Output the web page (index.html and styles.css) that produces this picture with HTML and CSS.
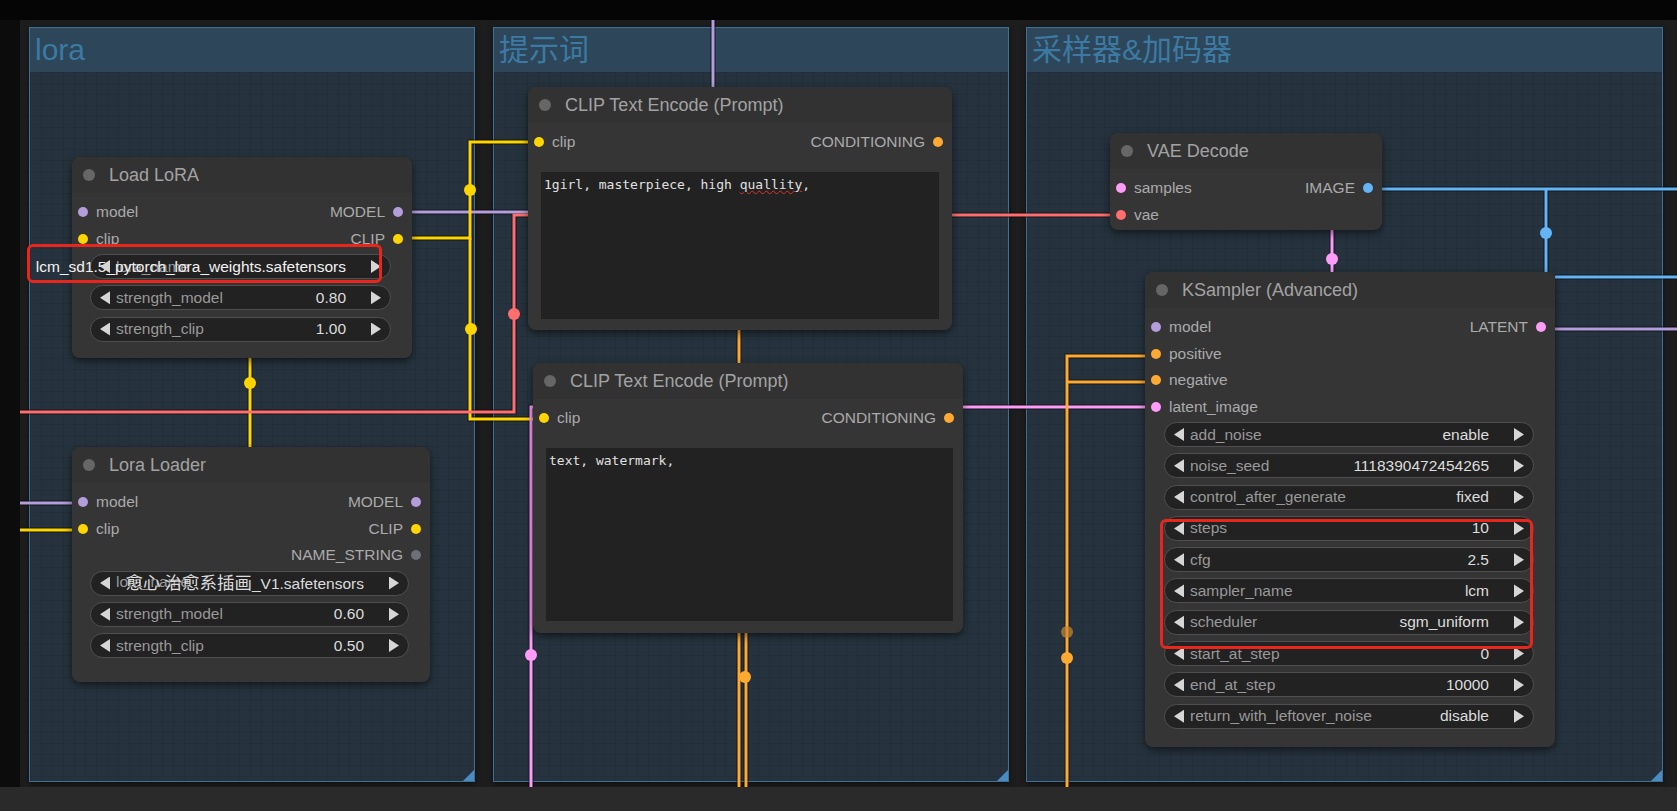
FILE: index.html
```html
<!DOCTYPE html>
<html lang="zh">
<head>
<meta charset="utf-8">
<title>ComfyUI workflow</title>
<link rel="stylesheet" href="styles.css">
</head>
<body>
<div class="app">
  <div class="topbar"></div>
  <div class="middle">
    <div class="leftbar"></div>
    <div class="canvas">
      <div class="group g-lora"><div class="group-title">lora</div></div>
      <div class="group g-prompt"><div class="group-title">提示词</div></div>
      <div class="group g-sampler"><div class="group-title">采样器&amp;加码器</div></div>

      <svg class="wires" width="1657" height="767" viewBox="20 20 1657 767">
        <g class="under">
          <path d="M713 20 V87"/>
          <path d="M404 212 H528"/>
          <path d="M404 238 H470 V142 H534"/>
          <path d="M470 238 V419 H534"/>
          <path d="M250 358 V447"/>
          <path d="M20 412 H514 V215 H1112"/>
          <path d="M20 503 H74"/>
          <path d="M20 530 H74"/>
          <path d="M531 787 V407 H1152"/>
          <path d="M1332 230 V272"/>
          <path d="M1376 189 H1677"/>
          <path d="M1546 189 V272"/>
          <path d="M1555 277 H1677"/>
          <path d="M1549 329 H1677"/>
          <path d="M1067 787 V356 H1147"/>
          <path d="M1068 382 H1147"/>
          <path d="M739 330 V363"/>
          <path d="M739 633 V787"/>
          <path d="M746 633 V787"/>
        </g>
        <g class="w-model"><path d="M713 20 V87"/><path d="M404 212 H528"/><path d="M20 503 H74"/><path d="M1549 329 H1677"/></g>
        <g class="w-clip"><path d="M404 238 H470 V142 H534"/><path d="M470 238 V419 H534"/><path d="M250 358 V447"/><path d="M20 530 H74"/></g>
        <g class="w-vae"><path d="M20 412 H514 V215 H1112"/></g>
        <g class="w-latent"><path d="M531 787 V407 H1152"/><path d="M1332 230 V272"/></g>
        <g class="w-image"><path d="M1376 189 H1677"/><path d="M1546 189 V272"/><path d="M1555 277 H1677"/></g>
        <g class="w-cond"><path d="M1067 787 V356 H1147"/><path d="M1068 382 H1147"/><path d="M739 330 V363"/><path d="M739 633 V787"/><path d="M746 633 V787"/></g>
        <g class="knots">
          <circle class="k-clip" cx="470" cy="190" r="6"/>
          <circle class="k-clip" cx="471" cy="329" r="6"/>
          <circle class="k-clip" cx="250" cy="383" r="6"/>
          <circle class="k-vae" cx="514" cy="314" r="6"/>
          <circle class="k-latent" cx="531" cy="655" r="6"/>
          <circle class="k-latent" cx="1332" cy="259" r="6"/>
          <circle class="k-image" cx="1546" cy="233" r="6"/>
          <circle class="k-cond" cx="745" cy="677" r="6"/>
          <circle class="k-cond faint" cx="1067" cy="632" r="6"/>
          <circle class="k-cond" cx="1067" cy="658" r="6"/>
        </g>
      </svg>

      <div class="node n-loadlora">
        <div class="node-title"><span class="tdot"></span>Load LoRA</div>
        <div class="slots">
          <div class="row"><span class="in"><i class="dot c-model"></i>model</span><span class="out">MODEL<i class="dot c-model"></i></span></div>
          <div class="row"><span class="in"><i class="dot c-clip"></i>clip</span><span class="out">CLIP<i class="dot c-clip"></i></span></div>
        </div>
        <div class="widgets">
          <div class="widget"><i class="arr arr-l"></i><div class="wbody"><span class="wlabel">lora_name</span><span class="wvalue bright">lcm_sd1.5_pytorch_lora_weights.safetensors</span></div><i class="arr arr-r"></i></div>
          <div class="widget"><i class="arr arr-l"></i><div class="wbody"><span class="wlabel">strength_model</span><span class="wvalue">0.80</span></div><i class="arr arr-r"></i></div>
          <div class="widget"><i class="arr arr-l"></i><div class="wbody"><span class="wlabel">strength_clip</span><span class="wvalue">1.00</span></div><i class="arr arr-r"></i></div>
        </div>
      </div>

      <div class="node n-loraloader">
        <div class="node-title"><span class="tdot"></span>Lora Loader</div>
        <div class="slots">
          <div class="row"><span class="in"><i class="dot c-model"></i>model</span><span class="out">MODEL<i class="dot c-model"></i></span></div>
          <div class="row"><span class="in"><i class="dot c-clip"></i>clip</span><span class="out">CLIP<i class="dot c-clip"></i></span></div>
          <div class="row row-out"><span class="out">NAME_STRING<i class="dot c-str"></i></span></div>
        </div>
        <div class="widgets">
          <div class="widget"><i class="arr arr-l"></i><div class="wbody"><span class="wlabel">lora_name</span><span class="wvalue"><span class="cjk">愈心 治愈系插画</span>_V1.safetensors</span></div><i class="arr arr-r"></i></div>
          <div class="widget"><i class="arr arr-l"></i><div class="wbody"><span class="wlabel">strength_model</span><span class="wvalue">0.60</span></div><i class="arr arr-r"></i></div>
          <div class="widget"><i class="arr arr-l"></i><div class="wbody"><span class="wlabel">strength_clip</span><span class="wvalue">0.50</span></div><i class="arr arr-r"></i></div>
        </div>
      </div>

      <div class="node n-clip1">
        <div class="node-title"><span class="tdot"></span>CLIP Text Encode (Prompt)</div>
        <div class="slots">
          <div class="row"><span class="in"><i class="dot c-clip"></i>clip</span><span class="out">CONDITIONING<i class="dot c-cond"></i></span></div>
        </div>
        <div class="prompt">1girl, masterpiece, high <span class="typo">quallity</span>,</div>
      </div>

      <div class="node n-clip2">
        <div class="node-title"><span class="tdot"></span>CLIP Text Encode (Prompt)</div>
        <div class="slots">
          <div class="row"><span class="in"><i class="dot c-clip"></i>clip</span><span class="out">CONDITIONING<i class="dot c-cond"></i></span></div>
        </div>
        <div class="prompt">text, watermark,</div>
      </div>

      <div class="node n-vae">
        <div class="node-title"><span class="tdot"></span>VAE Decode</div>
        <div class="slots">
          <div class="row"><span class="in"><i class="dot c-latent"></i>samples</span><span class="out">IMAGE<i class="dot c-image"></i></span></div>
          <div class="row"><span class="in"><i class="dot c-vae"></i>vae</span></div>
        </div>
      </div>

      <div class="node n-ksampler">
        <div class="node-title"><span class="tdot"></span>KSampler (Advanced)</div>
        <div class="slots">
          <div class="row"><span class="in"><i class="dot c-model"></i>model</span><span class="out">LATENT<i class="dot c-latent"></i></span></div>
          <div class="row"><span class="in"><i class="dot c-cond"></i>positive</span></div>
          <div class="row"><span class="in"><i class="dot c-cond"></i>negative</span></div>
          <div class="row"><span class="in"><i class="dot c-latent"></i>latent_image</span></div>
        </div>
        <div class="widgets">
          <div class="widget"><i class="arr arr-l"></i><div class="wbody"><span class="wlabel">add_noise</span><span class="wvalue">enable</span></div><i class="arr arr-r"></i></div>
          <div class="widget"><i class="arr arr-l"></i><div class="wbody"><span class="wlabel">noise_seed</span><span class="wvalue">1118390472454265</span></div><i class="arr arr-r"></i></div>
          <div class="widget"><i class="arr arr-l"></i><div class="wbody"><span class="wlabel">control_after_generate</span><span class="wvalue">fixed</span></div><i class="arr arr-r"></i></div>
          <div class="widget"><i class="arr arr-l"></i><div class="wbody"><span class="wlabel">steps</span><span class="wvalue">10</span></div><i class="arr arr-r"></i></div>
          <div class="widget"><i class="arr arr-l"></i><div class="wbody"><span class="wlabel">cfg</span><span class="wvalue">2.5</span></div><i class="arr arr-r"></i></div>
          <div class="widget"><i class="arr arr-l"></i><div class="wbody"><span class="wlabel">sampler_name</span><span class="wvalue">lcm</span></div><i class="arr arr-r"></i></div>
          <div class="widget"><i class="arr arr-l"></i><div class="wbody"><span class="wlabel">scheduler</span><span class="wvalue">sgm_uniform</span></div><i class="arr arr-r"></i></div>
          <div class="widget"><i class="arr arr-l"></i><div class="wbody"><span class="wlabel">start_at_step</span><span class="wvalue">0</span></div><i class="arr arr-r"></i></div>
          <div class="widget"><i class="arr arr-l"></i><div class="wbody"><span class="wlabel">end_at_step</span><span class="wvalue">10000</span></div><i class="arr arr-r"></i></div>
          <div class="widget"><i class="arr arr-l"></i><div class="wbody"><span class="wlabel">return_with_leftover_noise</span><span class="wvalue">disable</span></div><i class="arr arr-r"></i></div>
        </div>
      </div>

      <div class="mark mark-lora"></div>
      <div class="mark mark-sampler"></div>
    </div>
  </div>
  <div class="bottombar"></div>
</div>
</body>
</html>
```

FILE: styles.css
```css
* { box-sizing: border-box; }
html, body { margin: 0; padding: 0; }
body {
  background: #050505;
  font-family: "Liberation Sans", Arial, "Noto Sans CJK SC", sans-serif;
  overflow: hidden;
}
.app {
  width: 1677px;
  height: 811px;
  display: flex;
  flex-direction: column;
}
.topbar { height: 20px; background: #050505; flex: none; }
.middle { height: 767px; display: flex; flex: none; }
.leftbar { width: 20px; background: #0c0c0c; flex: none; }
.canvas {
  flex: 1;
  position: relative;
  background: #1d1d1d;
  overflow: hidden;
}
.bottombar { height: 24px; background: #2a2a2a; flex: none; }

/* groups */
.group {
  position: absolute;
  border: 1px solid #3e7096;
  background-color: #26333e;
  background-image:
    linear-gradient(rgba(0,0,0,0.07) 1px, transparent 1px),
    linear-gradient(90deg, rgba(0,0,0,0.07) 1px, transparent 1px);
  background-size: 11px 11px;
  box-shadow: 0 2px 6px rgba(0,0,0,0.45);
}
.group::after {
  content: "";
  position: absolute;
  right: 0;
  bottom: 0;
  width: 11px;
  height: 11px;
  background: #4a8cc2;
  clip-path: polygon(100% 0, 100% 100%, 0 100%);
}
.group-title {
  height: 44px;
  line-height: 44px;
  padding-left: 5px;
  background: #2d4659;
  color: #3c7aa3;
  font-size: 30px;
  font-family: "Liberation Sans", Arial, "Noto Sans CJK SC", sans-serif;
  white-space: nowrap;
}
.g-lora { left: 9px; top: 7px; width: 446px; height: 755px; }
.g-prompt { left: 473px; top: 7px; width: 516px; height: 755px; }
.g-sampler { left: 1006px; top: 7px; width: 637px; height: 755px; }

/* wires */
.wires { position: absolute; left: 0; top: 0; }
.wires path { fill: none; stroke-width: 3; stroke-linejoin: miter; }
.wires .under path { stroke: rgba(0,0,0,0.55); stroke-width: 5; }
.w-model path { stroke: #b39ddb; }
.w-clip path { stroke: #ffd500; }
.w-vae path { stroke: #ff6e6e; }
.w-latent path { stroke: #ff9cf9; }
.w-image path { stroke: #64b5f6; }
.w-cond path { stroke: #ffa931; }
.k-clip { fill: #ffd500; }
.k-vae { fill: #ff6e6e; }
.k-latent { fill: #ff9cf9; }
.k-image { fill: #64b5f6; }
.k-cond { fill: #ffa931; }
.knots .faint { fill: #c98a30; opacity: 0.7; }

/* nodes */
.node {
  position: absolute;
  background: #353535;
  border-radius: 8px;
  box-shadow: 0 3px 8px rgba(0,0,0,0.55);
  display: flex;
  flex-direction: column;
  color: #aaa;
  font-size: 15.5px;
}
.node-title {
  height: 36px;
  flex: none;
  display: flex;
  align-items: center;
  gap: 14px;
  padding-left: 11px;
  font-size: 18px;
  color: #a2a2a2;
  background: #323232;
  border-radius: 8px 8px 0 0;
  white-space: nowrap;
}
.tdot {
  width: 12px;
  height: 12px;
  border-radius: 50%;
  background: #666;
  flex: none;
}
.slots { padding-top: 6px; flex: none; }
.row {
  height: 26.5px;
  display: flex;
  align-items: center;
  justify-content: space-between;
  white-space: nowrap;
}
.row-out { justify-content: flex-end; }
.in, .out { display: flex; align-items: center; gap: 8px; }
.in { padding-left: 6px; }
.out { padding-right: 9px; }
.dot {
  width: 10px;
  height: 10px;
  border-radius: 50%;
  flex: none;
}
.c-model { background: #b39ddb; }
.c-clip { background: #ffd500; }
.c-vae { background: #ff6e6e; }
.c-latent { background: #ff9cf9; }
.c-cond { background: #ffa931; }
.c-image { background: #64b5f6; }
.c-str { background: #6e6e78; }

.widgets {
  display: flex;
  flex-direction: column;
  gap: 6.3px;
  padding: 2px 21px 0 18px;
}
.widget {
  height: 25px;
  border-radius: 13px;
  background: #222;
  border: 1px solid #4f4f4f;
  display: flex;
  align-items: center;
  padding: 0 9px;
  white-space: nowrap;
}
.arr {
  width: 10px;
  height: 13px;
  background: #d6d6d6;
  flex: none;
}
.arr-l { clip-path: polygon(0 50%, 100% 0, 100% 100%); }
.arr-r { clip-path: polygon(0 0, 100% 50%, 0 100%); }
.wbody {
  flex: 1;
  min-width: 0;
  display: grid;
  grid-template-columns: minmax(0, 1fr);
  margin: 0 25px 0 6px;
}
.wlabel, .wvalue { grid-area: 1 / 1; white-space: nowrap; }
.wlabel { justify-self: start; color: #999; }
.wvalue {
  justify-self: end;
  justify-self: unsafe end;
  color: #dcdcdc;
}
.wvalue.bright { color: #f2f2f2; }
.cjk { font-size: 17.5px; font-family: "Noto Sans CJK SC", sans-serif; line-height: 1; }

.prompt {
  flex: 1;
  margin: 16px 13px 11px 13px;
  background: #222;
  padding: 5px 3px;
  font-family: "DejaVu Sans Mono", "Liberation Mono", monospace;
  font-size: 13px;
  color: #e0e0e0;
  white-space: pre;
}
.typo { text-decoration: underline wavy #e03030; text-decoration-thickness: 1px; }

.n-loadlora { left: 52px; top: 137px; width: 340px; height: 201px; }
.n-loraloader { left: 52px; top: 427px; width: 358px; height: 235px; }
.n-clip1 { left: 508px; top: 67px; width: 424px; height: 243px; }
.n-clip2 { left: 513px; top: 343px; width: 430px; height: 270px; }
.n-clip2 .prompt { margin-right: 10px; margin-bottom: 12px; }
.n-vae { left: 1090px; top: 113px; width: 272px; height: 97px; }
.n-ksampler { left: 1125px; top: 252px; width: 410px; height: 475px; }
.n-ksampler .widgets { padding: 2px 21px 0 19px; }

/* annotation marks */
.mark {
  position: absolute;
  border: 3px solid #e8261d;
  border-radius: 6px;
}
.mark-lora { left: 7px; top: 224px; width: 355px; height: 39px; }
.mark-sampler { left: 1140px; top: 499px; width: 373px; height: 130px; }
```
